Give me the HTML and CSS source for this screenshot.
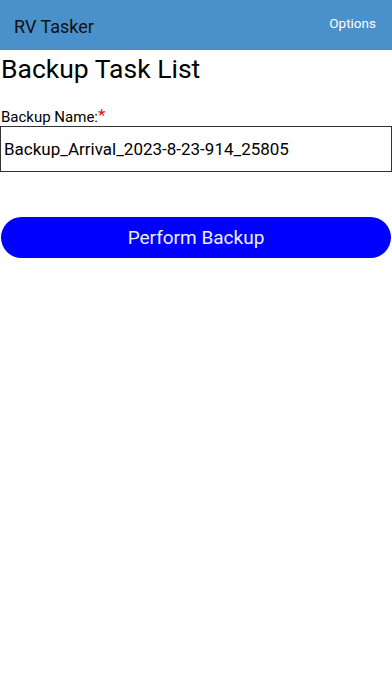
FILE: index.html
```html
<!DOCTYPE html>
<html>
<head>
<meta charset="utf-8">
<link rel="stylesheet" href="styles.css">
</head>
<body>
<header class="appbar">
  <div class="app-title">RV Tasker</div>
  <div class="app-options">Options</div>
</header>
<main class="content">
  <h1 class="page-title">Backup Task List</h1>
  <label class="field-label">Backup Name:<span class="req">*</span></label>
  <div class="field-input">Backup_Arrival_2023-8-23-914_25805</div>
  <button class="primary-btn">Perform Backup</button>
</main>
</body>
</html>
```
FILE: styles.css
```css
html, body {
  margin: 0;
  padding: 0;
  background: #ffffff;
  font-family: Roboto, "Liberation Sans", sans-serif;
  color: #000;
}
.appbar {
  height: 50px;
  background: #4a90cb;
  display: flex;
  align-items: center;
  justify-content: space-between;
  padding: 0 16px 0 14px;
  box-sizing: border-box;
}
.app-title {
  font-size: 18px;
  color: #111;
  margin-top: 2px;
}
.app-options {
  font-size: 13.5px;
  color: #ffffff;
  margin-top: -4px;
}
.content {
  display: flex;
  flex-direction: column;
}
.page-title {
  margin: 4px 0 0 1px;
  font-size: 26.5px;
  font-weight: normal;
  line-height: 30px;
}
.field-label {
  margin-top: 24px;
  margin-left: 1px;
  font-size: 15px;
  line-height: 18px;
}
.req {
  color: #e01010;
  font-size: 17px;
  vertical-align: top;
  line-height: 14px;
}
.field-input {
  height: 46px;
  box-sizing: border-box;
  border: 1.5px solid #333;
  font-size: 17px;
  display: flex;
  align-items: center;
  padding-left: 3px;
  margin-top: 0;
}
.primary-btn {
  margin: 45px 1px 0 1px;
  height: 41px;
  border: none;
  border-radius: 21px;
  background: #0000fe;
  color: #eef;
  font-family: Roboto, "Liberation Sans", sans-serif;
  font-size: 19px;
  padding: 0;
}
```
